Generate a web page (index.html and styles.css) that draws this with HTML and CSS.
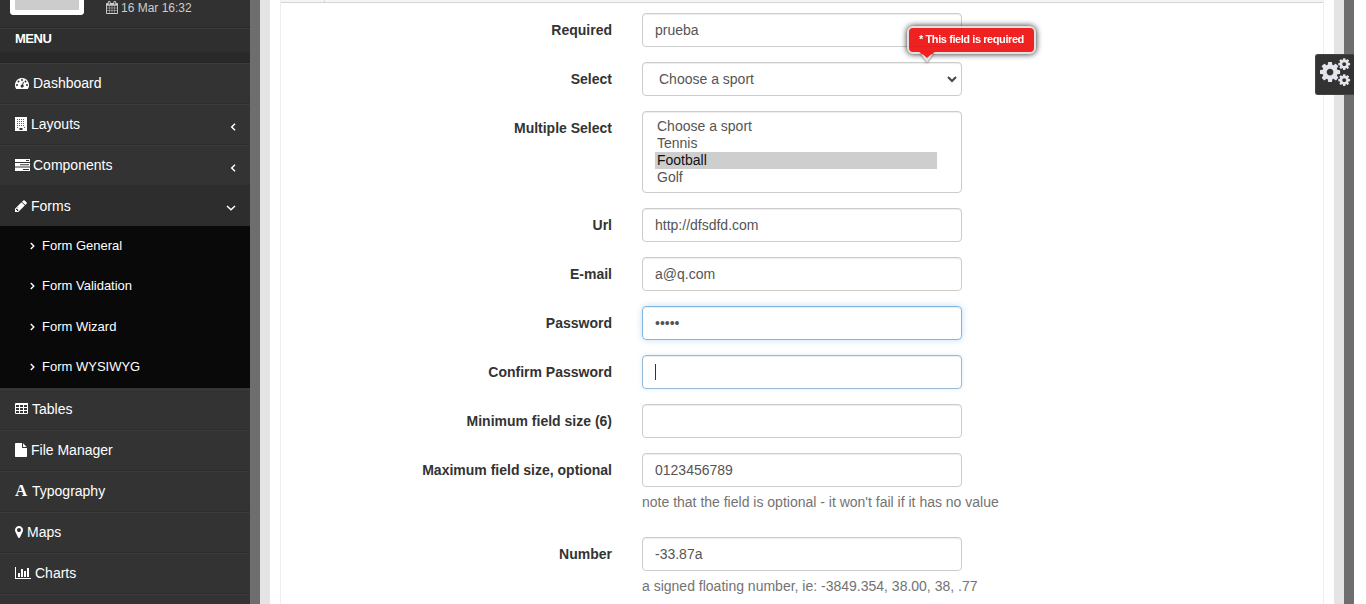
FILE: index.html
```
<!DOCTYPE html>
<html lang="en">
<head>
<meta charset="utf-8">
<title>Form Validation</title>
<link rel="stylesheet" href="styles.css">
</head>
<body>
<div class="page">
  <aside class="sidebar">
    <div class="profile">
      <div class="avatar"></div>
      <div class="date"><svg width="12" height="13" viewBox="64 0 1664 1792"><path d="M192 1664h288v-288h-288v288zm352 0h320v-288h-320v288zm-352-352h288v-320h-288v320zm352 0h320v-320h-320v320zm-352-384h288v-288h-288v288zm736 736h320v-288h-320v288zm-384-736h320v-288h-320v288zm768 736h288v-288h-288v288zm-384-352h320v-320h-320v320zm-352-864v-288q0-13-9.5-22.5t-22.5-9.5h-64q-13 0-22.5 9.5t-9.5 22.5v288q0 13 9.5 22.5t22.5 9.5h64q13 0 22.5-9.5t9.5-22.5zm736 864h288v-320h-288v320zm-384-384h320v-288h-320v288zm384 0h288v-288h-288v288zm32-480v-288q0-13-9.5-22.5t-22.5-9.5h-64q-13 0-22.5 9.5t-9.5 22.5v288q0 13 9.5 22.5t22.5 9.5h64q13 0 22.5-9.5t9.5-22.5zm384-64v1280q0 52-38 90t-90 38h-1408q-52 0-90-38t-38-90v-1280q0-52 38-90t90-38h128v-96q0-66 47-113t113-47h64q66 0 113 47t47 113v96h384v-96q0-66 47-113t113-47h64q66 0 113 47t47 113v96h128q52 0 90 38t38 90z"/></svg><span>16 Mar 16:32</span></div>
    </div>
    <div class="menu-title">MENU</div>
    <div class="divider"></div>
    <nav>
      <a class="item"><svg width="14" height="14" viewBox="0 0 14 14"><path fill-rule="evenodd" d="M7 2a7 7 0 0 1 5.900 10.800q-.2.2-.5.2H1.600q-.3 0-.5-.2A7 7 0 0 1 7 2zM2 8a1 1 0 1 0 0 2 1 1 0 0 0 0-2zM3.500 4.500a1 1 0 1 0 0 2 1 1 0 0 0 0-2zM7 3a1 1 0 1 0 0 2 1 1 0 0 0 0-2zM10.500 4.500a1 1 0 1 0 0 2 1 1 0 0 0 0-2zM12 8a1 1 0 1 0 0 2 1 1 0 0 0 0-2zM8 5.800l-.8 2.800a1.500 1.500 0 1 0 .9.300l.8-2.900z"/></svg><span>Dashboard</span></a>
      <a class="item"><svg width="12" height="14" viewBox="0 0 12 14"><path fill-rule="evenodd" d="M0 0h12v14H0zM4.500 11v2h3v-2z"/><path class="windows" d="M2 2.500h8M2 4.500h8M2 6.500h8M2 8.500h8M2 10.500h1M9 10.500h1"/></svg><span>Layouts</span><svg class="arrow" width="6" height="8" viewBox="0 0 6 8"><path d="M5 .7L1.700 4 5 7.300"/></svg></a>
      <a class="item"><svg width="15" height="14" viewBox="0 0 15 14"><path fill-rule="evenodd" d="M0 1h15v3H0zM0 5h15v3.500H0zM0 9.500h15V13H0zM11 2v1h3V2zM5 6.300v1h9v-1zM8 11v1h6v-1z"/></svg><span class="tight">Components</span><svg class="arrow" width="6" height="8" viewBox="0 0 6 8"><path d="M5 .7L1.700 4 5 7.300"/></svg></a>
      <a class="item active"><svg width="12" height="14" viewBox="128 0 1536 1792"><path d="M491 1536l91-91-235-235-91 91v107h128v128h107zm523-928q0-22-22-22-10 0-17 7l-542 542q-7 7-7 17 0 22 22 22 10 0 17-7l542-542q7-7 7-17zm-54-192l416 416-832 832h-416v-416zm683 96q0 53-37 90l-166 166-416-416 166-165q36-38 90-38 53 0 91 38l235 234q37 39 37 91z"/><path d="M950 520L480 1000 750 1250 1230 780z"/></svg><span>Forms</span><svg class="arrow down" width="10" height="6" viewBox="0 0 10 6"><path d="M1 1l4 3.700L9 1"/></svg></a>
      <div class="submenu">
        <a><svg width="5" height="8" viewBox="0 0 5 8"><path d="M.8 1l3 3-3 3"/></svg>Form General</a>
        <a><svg width="5" height="8" viewBox="0 0 5 8"><path d="M.8 1l3 3-3 3"/></svg>Form Validation</a>
        <a><svg width="5" height="8" viewBox="0 0 5 8"><path d="M.8 1l3 3-3 3"/></svg>Form Wizard</a>
        <a><svg width="5" height="8" viewBox="0 0 5 8"><path d="M.8 1l3 3-3 3"/></svg>Form WYSIWYG</a>
      </div>
      <a class="item"><svg width="13" height="14" viewBox="0 0 13 14"><path fill-rule="evenodd" d="M1 1h12v10q0 1-1 1H1q-1 0-1-1V2q0-1 1-1zM1 3v2h3V3zM5 3v2h3V3zM9 3v2h3V3zM1 6v2h3V6zM5 6v2h3V6zM9 6v2h3V6zM1 9v2h3V9zM5 9v2h3V9zM9 9v2h3V9z"/></svg><span>Tables</span></a>
      <a class="item"><svg width="12" height="14" viewBox="128 0 1536 1792"><path d="M1152 512v-472q22 14 36 28l408 408q14 14 28 36h-472zm-128 32q0 40 28 68t68 28h544v1056q0 40-28 68t-68 28h-1344q-40 0-68-28t-28-68v-1600q0-40 28-68t68-28h800v544z"/></svg><span>File Manager</span></a>
      <a class="item"><b class="letter">A</b><span>Typography</span></a>
      <a class="item"><svg width="8" height="14" viewBox="384 0 1024 1792"><path d="M1152 640q0-106-75-181t-181-75-181 75-75 181 75 181 181 75 181-75 75-181zm256 0q0 109-33 179l-364 774q-16 33-47.500 52t-67.500 19-67.500-19-46.500-52l-365-774q-33-70-33-179 0-212 150-362t362-150 362 150 150 362z"/></svg><span>Maps</span></a>
      <a class="item"><svg width="16" height="14" viewBox="0 0 16 14"><path d="M0 1h1v11h15v1H0zM3 7h2v4H3zM6 3h2v8H6zM9 5h2v6H9zM12 2h2v9h-2z"/></svg><span>Charts</span></a>
      <a class="item"></a>
    </nav>
  </aside>
  <main class="content">
    <section class="panel">
      <header class="panel-head"><i></i></header>
      <div class="form">
        <div class="row"><label>Required</label><div class="field">prueba</div></div>
        <div class="row"><label>Select</label><div class="field select"><span>Choose a sport</span><svg width="10" height="7" viewBox="0 0 10 7"><path d="M1 1l4 4 4-4"/></svg></div></div>
        <div class="row"><label>Multiple Select</label><div class="field list"><div>Choose a sport</div><div>Tennis</div><div class="chosen">Football</div><div>Golf</div></div></div>
        <div class="row"><label>Url</label><div class="field">http://dfsdfd.com</div></div>
        <div class="row"><label>E-mail</label><div class="field">a@q.com</div></div>
        <div class="row"><label>Password</label><div class="field focus">•••••</div></div>
        <div class="row"><label>Confirm Password</label><div class="field focus fading"><i class="caret"></i></div></div>
        <div class="row"><label>Minimum field size (6)</label><div class="field"></div></div>
        <div class="row"><label>Maximum field size, optional</label><div><div class="field">0123456789</div><p>note that the field is optional - it won't fail if it has no value</p></div></div>
        <div class="row"><label>Number</label><div><div class="field">-33.87a</div><p>a signed floating number, ie: -3849.354, 38.00, 38, .77</p></div></div>
      </div>
    </section>
  </main>
  <div class="tooltip">* This field is required<svg width="18" height="12" viewBox="0 0 18 12"><path class="tip-edge" d="M3 2L9 10.500 15 2z"/><path class="tip-fill" d="M1.500 0h15L14 2.500h-1L9 6 5 2.500H4z"/></svg></div>
  <div class="settings"><svg width="31" height="30" viewBox="0 0 31 30"><defs><path id="cog" d="M1152 896q0-106-75-181t-181-75-181 75-75 181 75 181 181 75 181-75 75-181zm512-109v222q0 12-8 23t-20 13l-185 28q-19 54-39 91 35 50 107 138 10 12 10 25t-9 23q-27 37-99 108t-94 71q-12 0-26-9l-138-108q-44 23-91 38-16 136-29 186-7 28-36 28h-222q-14 0-24.500-8.500t-11.500-21.500l-28-184q-49-16-90-37l-141 107q-10 9-25 9-14 0-25-11-126-114-165-168-7-10-7-23 0-12 8-23 15-21 51-66.500t54-70.500q-27-50-41-99l-183-27q-13-2-21-12.500t-8-23.500v-222q0-12 8-23t19-13l186-28q14-46 39-92-40-57-107-138-10-12-10-24 0-10 9-23 26-36 98.500-107.500t94.500-71.500q13 0 26 10l138 107q44-23 91-38 16-136 29-186 7-28 36-28h222q14 0 24.500 8.500t11.500 21.500l28 184q49 16 90 37l142-107q9-9 24-9 13 0 25 10 129 119 165 170 7 8 7 22 0 12-8 23-15 21-51 66.500t-54 70.500q26 50 41 98l183 28q13 2 21 12.500t8 23.500z"/></defs><use href="#cog" transform="translate(-1.700 2.300) scale(.0131)"/><use href="#cog" transform="translate(17.300 -.8) scale(.0077)"/><use href="#cog" transform="translate(17.300 15.200) scale(.0077)"/></svg></div>
</div>
</body>
</html>
```

FILE: styles.css
```
* { box-sizing: border-box; }
body { margin: 0; background: #fff; font: 14px/20px "Liberation Sans", Arial, sans-serif; overflow: hidden; }
.page { position: relative; display: flex; width: 1354px; height: 604px; overflow: hidden; background: #6e6e6e; }
svg { display: block; flex: none; }
.sidebar { width: 260px; height: 604px; overflow: hidden; flex: none; background: #333; border-right: 10px solid #6e6e6e; color: #fff; fill: #fff; }
.profile { display: flex; height: 28px; padding-left: 10px; background: #313131; border-bottom: 1px solid #292929; }
.avatar { width: 74px; height: 15px; background: #ccc; border: 5px solid #fff; border-top: 0; border-radius: 0 0 4px 4px; }
.date { display: flex; gap: 3px; height: 16px; margin-left: 22px; padding-top: 1px; font-size: 12px; line-height: 14px; color: #ccc; fill: #ccc; }
.menu-title { height: 24px; padding-left: 15px; background: #2f2f2f; border-top: 1px solid #3b3b3b; font-size: 13px; line-height: 20px; font-weight: bold; letter-spacing: -.5px; }
.divider { height: 11px; background: #292929; border-bottom: 1px solid #262626; }
.item { display: flex; align-items: center; gap: 4px; height: 41px; padding: 0 14px 1px 15px; background: #333; border-top: 1px solid #3b3b3b; border-bottom: 1px solid #2d2d2d; }
.item.active { height: 40px; background: #2d2d2d; border-color: #2d2d2d; }
.tight { margin-left: -1px; }
.arrow { margin: 5px 0 0 auto; fill: none; stroke: #fff; stroke-width: 1.5; }
.windows { fill: none; stroke: #8b3c94; stroke-width: 1; stroke-dasharray: 1 1; }
.letter { width: 13px; font: bold 17px/18px "Liberation Serif", serif; }
.submenu { height: 162px; margin-bottom: 1px; padding-top: .4px; background: #090909; }
.submenu a { display: flex; align-items: center; gap: 7px; height: 40.4px; padding: 0 0 1.5px 30px; font-size: 13px; }
.submenu svg { fill: none; stroke: #fff; stroke-width: 1.4; }
.content { width: 1084px; flex: none; background: #fff; border: solid #e4e4e4; border-width: 0 10px; padding: 0 10px; }
.panel { height: 604px; border: solid #eee; border-width: 0 1px; }
.panel-head { display: flex; height: 3px; padding-left: 43px; background: #f5f5f5; border-bottom: 1px solid #d5d5d5; }
.panel-head i { width: 1px; background: #ddd; }
.form { display: flex; flex-direction: column; gap: 15px; padding-top: 10px; }
.row { display: grid; grid-template-columns: 331px 320px; column-gap: 30px; }
label { padding-top: 7px; text-align: right; color: #333; font-weight: bold; white-space: nowrap; }
.field { display: flex; width: 320px; height: 34px; padding: 6px 12px; border: 1px solid #ccc; border-radius: 4px; color: #555; box-shadow: inset 0 1px 1px rgba(0,0,0,.075); }
.select { justify-content: space-between; padding: 6px 4px 6px 16px; }
.select svg { margin-top: 7px; fill: none; stroke: #444; stroke-width: 2; }
.list { display: block; height: 82px; line-height: 17px; }
.list div { width: 282px; height: 17px; padding-left: 2px; }
.list .chosen { background: #cecece; color: #111; }
.focus { border-color: #80b6df; box-shadow: inset 0 1px 1px rgba(0,0,0,.075), 0 0 6px rgba(102,175,233,.4); }
.fading { border-color: #98bad5; box-shadow: inset 0 1px 1px rgba(0,0,0,.075), 0 0 4px rgba(102,175,233,.25); }
.caret { width: 1px; height: 16px; margin-top: 2px; background: #333; }
p { height: 20px; margin: 5px 0 10px; color: #737373; white-space: nowrap; }
.tooltip { position: absolute; left: 907px; top: 26px; width: 129px; height: 28px; border: 2px solid #ddd; border-radius: 6px; background: #ee0101; box-shadow: 0 0 6px #000; opacity: .87; color: #fff; font-size: 11px; font-weight: bold; line-height: 23px; text-align: center; white-space: nowrap; letter-spacing: -.42px; }
.tooltip svg { position: absolute; left: 9px; top: 24px; filter: drop-shadow(0 1px 1px rgba(0,0,0,.5)); }
.tip-edge { fill: #ddd; }
.tip-fill { fill: #ee0101; }
.settings { position: absolute; left: 1315px; top: 54px; width: 39px; height: 41px; padding: 3px 0 0 4px; border: 1px solid #444; border-right: 0; border-radius: 3px 0 0 3px; background: #333; fill: #e4e4ec; }
```
